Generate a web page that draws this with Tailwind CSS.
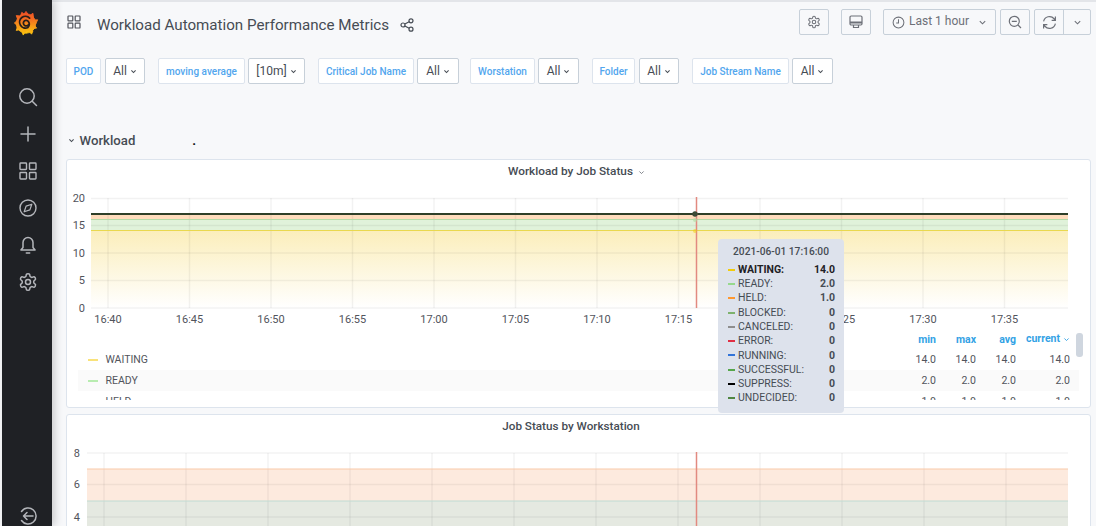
<!DOCTYPE html>
<html lang="en">
<head>
  <meta charset="UTF-8" />
  <title>Workload Automation Performance Metrics</title>
  <script src="https://cdn.jsdelivr.net/npm/@tailwindcss/browser@4"></script>
</head>
<body class="bg-[#f7f8fa] font-[Roboto,sans-serif]">
<div class="relative flex h-[526px] w-[1096px] overflow-hidden bg-[#f7f8fa] pl-[2px]">

  <!-- Sidebar -->
  <aside class="z-10 flex h-full w-[50px] flex-col items-center bg-[#1f2125] pl-[2px] text-[#b4b6bb] shadow-[3px_0_8px_rgba(0,0,0,0.18)]">
    <div class="flex h-[78.5px] w-full justify-center pr-[4px] pt-[10px]">
      <svg viewBox="0 0 28 28" class="h-[26px] w-[26px]">
        <defs>
          <linearGradient id="logo" x1="0" y1="0" x2="0" y2="1">
            <stop offset="0" stop-color="#ef4a28" />
            <stop offset="1" stop-color="#fcc60e" />
          </linearGradient>
        </defs>
        <g fill="url(#logo)" stroke="url(#logo)" stroke-width="1" stroke-linejoin="round">
          <circle cx="14" cy="14.500" r="10.500" />
          <path d="M14 1.500l2.500 3.500h-5zM21.500 3.500l.5 4.500-4-2zM26.500 10.500l-2 4.500-2.500-4zM25.500 19.500l-4.500.5 1.500-4zM20 26l-3-3.500h4.500zM11 27l-1.500-4.500h4.500zM3.500 22l1.500-4.500 3 3.500zM1.500 14l3.500-3v6zM3.500 6l4.500.5-3 3.500zM9.500 2.500l3 2.500-4.500 1.500z" />
        </g>
        <path d="M16.700 15.800a3 3 0 1 1-.8-4.100a4.800 4.800 0 0 1 .2 7.100a6.300 6.300 0 1 1 1.800-10.100" fill="none" stroke="#2a1f1a" stroke-width="1.900" stroke-linecap="round" />
      </svg>
    </div>
    <a class="flex h-[37px] items-center justify-center">
      <svg viewBox="0 0 20 20" class="h-[20px] w-[20px]" fill="none" stroke="currentColor" stroke-width="1.500"><circle cx="9" cy="9" r="7.200" /><path d="M14.200 14.200L18.500 18.500" stroke-linecap="round" /></svg>
    </a>
    <a class="flex h-[37px] items-center justify-center">
      <svg viewBox="0 0 20 20" class="h-[20px] w-[20px]" fill="none" stroke="currentColor" stroke-width="1.500"><path d="M10 3v14M3 10h14" stroke-linecap="round" /></svg>
    </a>
    <a class="flex h-[37px] items-center justify-center">
      <svg viewBox="0 0 20 20" class="h-[20px] w-[20px]" fill="none" stroke="currentColor" stroke-width="1.400"><rect x="2" y="2" width="6.500" height="6.500" rx="0.700" /><rect x="11.500" y="2" width="6.500" height="6.500" rx="0.700" /><rect x="2" y="11.500" width="6.500" height="6.500" rx="0.700" /><rect x="11.500" y="11.500" width="6.500" height="6.500" rx="0.700" /></svg>
    </a>
    <a class="flex h-[37px] items-center justify-center">
      <svg viewBox="0 0 20 20" class="h-[20px] w-[20px]" fill="none" stroke="currentColor" stroke-width="1.400"><circle cx="10" cy="10" r="8" /><path d="M13.800 6.200l-1.900 5.700-5.700 1.900 1.900-5.700z" fill="none" stroke-width="1.200" stroke-linejoin="round" /></svg>
    </a>
    <a class="flex h-[37px] items-center justify-center">
      <svg viewBox="0 0 24 24" class="h-[20px] w-[20px]" fill="none" stroke="currentColor" stroke-width="1.800" stroke-linecap="round" stroke-linejoin="round"><path d="M6 9a6 6 0 0 1 12 0v6l2.500 3H3.500L6 15z" /><path d="M10 21.500h4" /></svg>
    </a>
    <a class="flex h-[37px] items-center justify-center">
      <svg viewBox="0 0 24 24" class="h-[20px] w-[20px]" fill="none" stroke="currentColor" stroke-width="1.800" stroke-linecap="round" stroke-linejoin="round"><path d="M12.220 2h-.44a2 2 0 0 0-2 2v.18a2 2 0 0 1-1 1.730l-.43.250a2 2 0 0 1-2 0l-.15-.08a2 2 0 0 0-2.730.730l-.22.380a2 2 0 0 0 .730 2.730l.15.100a2 2 0 0 1 1 1.720v.510a2 2 0 0 1-1 1.740l-.15.090a2 2 0 0 0-.730 2.730l.22.380a2 2 0 0 0 2.730.730l.15-.08a2 2 0 0 1 2 0l.43.250a2 2 0 0 1 1 1.730V20a2 2 0 0 0 2 2h.44a2 2 0 0 0 2-2v-.18a2 2 0 0 1 1-1.730l.43-.25a2 2 0 0 1 2 0l.15.08a2 2 0 0 0 2.730-.73l.22-.39a2 2 0 0 0-.73-2.730l-.15-.08a2 2 0 0 1-1-1.740v-.5a2 2 0 0 1 1-1.740l.15-.09a2 2 0 0 0 .73-2.730l-.22-.38a2 2 0 0 0-2.730-.73l-.15.08a2 2 0 0 1-2 0l-.43-.25a2 2 0 0 1-1-1.730V4a2 2 0 0 0-2-2z" /><circle cx="12" cy="12" r="3" /></svg>
    </a>
    <a class="mt-auto flex h-[20px] items-start justify-center">
      <svg viewBox="0 0 20 20" class="h-[20px] w-[20px]" fill="none" stroke="currentColor" stroke-width="1.500" stroke-linecap="round" stroke-linejoin="round"><path d="M3.500 5.500a8 8 0 1 1 0 9" /><path d="M15 10H5.500M9 6.500L5.500 10 9 13.500" /></svg>
    </a>
  </aside>

  <!-- Main -->
  <main class="flex min-w-0 flex-1 flex-col border-t-2 border-[#e3e5e9] pl-[14px] pr-[5px] text-[#52545c]">

    <!-- Top bar -->
    <div class="mt-[7px] flex h-[26px] items-center">
      <svg viewBox="0 0 14 14" class="ml-[1px] h-[14px] w-[14px] text-[#52545c]" fill="none" stroke="currentColor" stroke-width="1.200"><rect x="1" y="1" width="4.800" height="4.800" rx="0.600" /><rect x="8.200" y="1" width="4.800" height="4.800" rx="0.600" /><rect x="1" y="8.200" width="4.800" height="4.800" rx="0.600" /><rect x="8.200" y="8.200" width="4.800" height="4.800" rx="0.600" /></svg>
      <h1 class="ml-[16px] mt-[7px] whitespace-nowrap text-[15.150px] text-[#464c54]">Workload Automation Performance Metrics</h1>
      <svg viewBox="0 0 14 14" class="ml-[11px] mt-[5px] h-[14px] w-[14px] text-[#464c54]" fill="none" stroke="currentColor" stroke-width="1.200"><circle cx="3" cy="7" r="2" /><circle cx="11" cy="2.800" r="2" /><circle cx="11" cy="11.200" r="2" /><path d="M4.800 6l4.400-2.300M4.800 8l4.400 2.300" /></svg>

      <div class="ml-auto flex items-center text-[#6d7078]">
        <button class="flex h-[26px] w-[30px] items-center justify-center rounded-[2px] border border-[#c7d0d9] bg-[#f7f8fa]">
          <svg viewBox="0 0 24 24" class="h-[14px] w-[14px]" fill="none" stroke="currentColor" stroke-width="1.800" stroke-linejoin="round"><path d="M12.220 2h-.44a2 2 0 0 0-2 2v.18a2 2 0 0 1-1 1.730l-.43.250a2 2 0 0 1-2 0l-.15-.08a2 2 0 0 0-2.730.730l-.22.380a2 2 0 0 0 .730 2.730l.15.100a2 2 0 0 1 1 1.720v.510a2 2 0 0 1-1 1.740l-.15.090a2 2 0 0 0-.730 2.730l.22.380a2 2 0 0 0 2.730.730l.15-.08a2 2 0 0 1 2 0l.43.250a2 2 0 0 1 1 1.730V20a2 2 0 0 0 2 2h.44a2 2 0 0 0 2-2v-.18a2 2 0 0 1 1-1.730l.43-.25a2 2 0 0 1 2 0l.15.08a2 2 0 0 0 2.730-.73l.22-.39a2 2 0 0 0-.73-2.730l-.15-.08a2 2 0 0 1-1-1.740v-.5a2 2 0 0 1 1-1.740l.15-.09a2 2 0 0 0 .73-2.730l-.22-.38a2 2 0 0 0-2.730-.73l-.15.08a2 2 0 0 1-2 0l-.43-.25a2 2 0 0 1-1-1.730V4a2 2 0 0 0-2-2z" /><circle cx="12" cy="12" r="3" /></svg>
        </button>
        <button class="ml-[12px] flex h-[26px] w-[30px] items-center justify-center rounded-[2px] border border-[#c7d0d9] bg-[#f7f8fa]">
          <svg viewBox="0 0 14 14" class="h-[14px] w-[14px]" fill="none" stroke="currentColor" stroke-width="1.200"><rect x="1" y="1" width="12" height="9" rx="1.200" /><path d="M1 7.500h12" stroke-width="2" /><path d="M4.500 10v2.500h5V10" /></svg>
        </button>
        <button class="ml-[12px] flex h-[26px] w-[113px] items-center rounded-[2px] border border-[#c7d0d9] bg-[#f7f8fa] pl-[8px] text-[12px]">
          <svg viewBox="0 0 14 14" class="mr-[4px] h-[13px] w-[13px]" fill="none" stroke="currentColor" stroke-width="1.100"><circle cx="7" cy="7" r="5.800" /><path d="M7 3.500V7.500H4.500" /></svg>
          <span class="mt-[-2px] whitespace-nowrap">Last 1 hour</span>
          <svg viewBox="0 0 10 10" class="ml-auto mr-[8px] h-[9px] w-[9px]" fill="none" stroke="currentColor" stroke-width="1.200"><path d="M2 3.500L5 6.500 8 3.500" /></svg>
        </button>
        <button class="ml-[4px] flex h-[26px] w-[30px] items-center justify-center rounded-[2px] border border-[#c7d0d9] bg-[#f7f8fa]">
          <svg viewBox="0 0 14 14" class="h-[14px] w-[14px]" fill="none" stroke="currentColor" stroke-width="1.200"><circle cx="6.300" cy="6.300" r="5" /><path d="M3.800 6.300h5M10 10l3 3" /></svg>
        </button>
        <div class="ml-[4px] flex h-[26px] rounded-[2px] border border-[#c7d0d9] bg-[#f7f8fa]">
          <button class="flex w-[29px] items-center justify-center border-r border-[#c7d0d9]">
            <svg viewBox="0 0 14 14" class="h-[15px] w-[15px]" fill="none" stroke="currentColor" stroke-width="1.100"><path d="M1.500 6a5.600 5.600 0 0 1 9.800-2.500L12.500 5M12.500 1.500V5H9M12.500 8a5.600 5.600 0 0 1-9.800 2.500L1.500 9M1.500 12.500V9H5" /></svg>
          </button>
          <button class="flex w-[26px] items-center justify-center">
            <svg viewBox="0 0 10 10" class="h-[9px] w-[9px]" fill="none" stroke="currentColor" stroke-width="1.200"><path d="M2 3.500L5 6.500 8 3.500" /></svg>
          </button>
        </div>
      </div>
    </div>

    <!-- Template variables -->
    <div class="mt-[23px] flex h-[26px] items-center text-[10px] font-medium">
      <span class="flex h-[26px] w-[35px] items-center justify-center rounded-[2px] border border-[#dde4ed] bg-white text-[#52a6ee]">POD</span>
      <span class="ml-[4px] flex h-[26px] w-[40px] items-center justify-center gap-[3px] rounded-[2px] border border-[#c7d0d9] bg-white text-[12px] font-normal text-[#464c54]">All<svg viewBox="0 0 10 10" class="h-[7px] w-[7px]" fill="none" stroke="currentColor" stroke-width="1.500"><path d="M2 3.500L5 6.500 8 3.500" /></svg></span>
      <span class="ml-[13px] flex h-[26px] w-[87px] items-center justify-center rounded-[2px] border border-[#dde4ed] bg-white text-[#52a6ee]">moving average</span>
      <span class="ml-[3px] flex h-[26px] w-[57px] items-center justify-center gap-[3px] rounded-[2px] border border-[#c7d0d9] bg-white text-[12px] font-normal text-[#464c54]">[10m]<svg viewBox="0 0 10 10" class="h-[7px] w-[7px]" fill="none" stroke="currentColor" stroke-width="1.500"><path d="M2 3.500L5 6.500 8 3.500" /></svg></span>
      <span class="ml-[13px] flex h-[26px] w-[96px] items-center justify-center rounded-[2px] border border-[#dde4ed] bg-white text-[#52a6ee]">Critical Job Name</span>
      <span class="ml-[3px] flex h-[26px] w-[42px] items-center justify-center gap-[3px] rounded-[2px] border border-[#c7d0d9] bg-white text-[12px] font-normal text-[#464c54]">All<svg viewBox="0 0 10 10" class="h-[7px] w-[7px]" fill="none" stroke="currentColor" stroke-width="1.500"><path d="M2 3.500L5 6.500 8 3.500" /></svg></span>
      <span class="ml-[11px] flex h-[26px] w-[65px] items-center justify-center rounded-[2px] border border-[#dde4ed] bg-white text-[#52a6ee]">Worstation</span>
      <span class="ml-[3px] flex h-[26px] w-[41px] items-center justify-center gap-[3px] rounded-[2px] border border-[#c7d0d9] bg-white text-[12px] font-normal text-[#464c54]">All<svg viewBox="0 0 10 10" class="h-[7px] w-[7px]" fill="none" stroke="currentColor" stroke-width="1.500"><path d="M2 3.500L5 6.500 8 3.500" /></svg></span>
      <span class="ml-[13px] flex h-[26px] w-[43px] items-center justify-center rounded-[2px] border border-[#dde4ed] bg-white text-[#52a6ee]">Folder</span>
      <span class="ml-[4px] flex h-[26px] w-[40px] items-center justify-center gap-[3px] rounded-[2px] border border-[#c7d0d9] bg-white text-[12px] font-normal text-[#464c54]">All<svg viewBox="0 0 10 10" class="h-[7px] w-[7px]" fill="none" stroke="currentColor" stroke-width="1.500"><path d="M2 3.500L5 6.500 8 3.500" /></svg></span>
      <span class="ml-[13px] flex h-[26px] w-[97px] items-center justify-center rounded-[2px] border border-[#dde4ed] bg-white text-[#52a6ee]">Job Stream Name</span>
      <span class="ml-[3px] flex h-[26px] w-[41px] items-center justify-center gap-[3px] rounded-[2px] border border-[#c7d0d9] bg-white text-[12px] font-normal text-[#464c54]">All<svg viewBox="0 0 10 10" class="h-[7px] w-[7px]" fill="none" stroke="currentColor" stroke-width="1.500"><path d="M2 3.500L5 6.500 8 3.500" /></svg></span>
    </div>

    <!-- Row header -->
    <div class="mt-[47px] flex h-[20px] items-center text-[13.200px] font-medium text-[#464c54]">
      <svg viewBox="0 0 10 10" class="ml-[2px] mr-[4.500px] h-[7px] w-[7px]" fill="none" stroke="currentColor" stroke-width="1.500"><path d="M2 3.500L5 6.500 8 3.500" /></svg>
      <span>Workload</span>
      <span class="ml-[57px] font-bold text-[#111]">.</span>
    </div>

    <!-- Panel: Workload by Job Status -->
    <section class="relative mt-[8px] h-[249px] shrink-0 rounded-[3px] border border-[#dde4ed] bg-white">
      <h2 class="flex h-[22px] items-center justify-center gap-[5px] pr-[4px] pt-[3px] text-[11.800px] font-medium text-[#464c54]">
        Workload by Job Status
        <svg viewBox="0 0 10 10" class="h-[7px] w-[7px] text-[#6d7078]" fill="none" stroke="currentColor" stroke-width="1.200"><path d="M2 3.500L5 6.500 8 3.500" /></svg>
      </h2>
      <svg viewBox="67 182 1023 148" class="block h-[148px] w-[1023px]" font-size="11" fill="#52545c">
        <defs>
          <linearGradient id="yellowFill" x1="0" y1="0" x2="0" y2="1">
            <stop offset="0" stop-color="#fbeebb" />
            <stop offset="1" stop-color="#ffffff" />
          </linearGradient>
        </defs>
        <rect x="91" y="230.500" width="977" height="77.500" fill="url(#yellowFill)" />
        <rect x="91" y="219.500" width="977" height="11" fill="#e0f2da" />
        <rect x="91" y="214" width="977" height="5.500" fill="#fedcbc" />
        <g stroke="#000" stroke-opacity="0.050" stroke-width="1.500">
          <path d="M91 198.500H1068M91 225.500H1068M91 253H1068M91 280.500H1068M91 308H1068" />
          <path d="M108 198V308M189.500 198V308M271 198V308M352.500 198V308M434 198V308M515.500 198V308M597 198V308M678.500 198V308M760 198V308M841.500 198V308M923 198V308M1004.500 198V308" />
        </g>
        <path d="M91 230.500H1068" stroke="#e9d84e" stroke-width="1" />
        <path d="M91 219.500H1068" stroke="#b5dca8" stroke-width="1" />
        <path d="M91 214H1068" stroke="#2e3f28" stroke-width="2" />
        <path d="M696.500 197V308" stroke="#e28a80" stroke-width="1.500" />
        <circle cx="695" cy="214" r="2.700" fill="#3c4a36" />
        <circle cx="695" cy="220" r="2" fill="#b5dca8" fill-opacity="0.700" />
        <circle cx="695" cy="231" r="2" fill="#f2cc0c" fill-opacity="0.500" />
        <g text-anchor="end">
          <text x="85" y="202">20</text>
          <text x="85" y="229">15</text>
          <text x="85" y="257">10</text>
          <text x="85" y="284">5</text>
          <text x="85" y="312">0</text>
        </g>
        <g text-anchor="middle">
          <text x="108" y="323">16:40</text>
          <text x="189.500" y="323">16:45</text>
          <text x="271" y="323">16:50</text>
          <text x="352.500" y="323">16:55</text>
          <text x="434" y="323">17:00</text>
          <text x="515.500" y="323">17:05</text>
          <text x="597" y="323">17:10</text>
          <text x="678.500" y="323">17:15</text>
          <text x="760" y="323">17:20</text>
          <text x="841.500" y="323">17:25</text>
          <text x="923" y="323">17:30</text>
          <text x="1004.500" y="323">17:35</text>
        </g>
      </svg>
      <!-- Legend -->
      <div class="ml-[11px] h-[70px] w-[1001px] overflow-hidden text-[10.500px] text-[#52545c]">
        <div class="flex h-[19px] items-center pr-[9px] pt-[2px] text-right font-bold text-[#33a2e5]">
          <span class="flex-1"></span>
          <span class="w-[40px]">min</span>
          <span class="w-[40px]">max</span>
          <span class="w-[40px]">avg</span>
          <span class="flex w-[54px] items-center justify-end gap-[3px] pb-[2px]">current<svg viewBox="0 0 10 10" class="h-[7px] w-[7px]" fill="none" stroke="currentColor" stroke-width="1.300"><path d="M2 3.500L5 6.500 8 3.500" /></svg></span>
        </div>
        <div class="flex h-[21px] items-center pl-[10px] pr-[9px] pt-[2px] text-right">
          <i class="h-[2px] w-[10px] bg-[#f9e27a]"></i><span class="ml-[7.500px] flex-1 text-left">WAITING</span>
          <span class="w-[40px]">14.0</span><span class="w-[40px]">14.0</span><span class="w-[40px]">14.0</span><span class="w-[54px]">14.0</span>
        </div>
        <div class="flex h-[21px] items-center bg-[#fafafa] pl-[10px] pr-[9px] pt-[2px] text-right">
          <i class="h-[2px] w-[10px] bg-[#b8ecb0]"></i><span class="ml-[7.500px] flex-1 text-left">READY</span>
          <span class="w-[40px]">2.0</span><span class="w-[40px]">2.0</span><span class="w-[40px]">2.0</span><span class="w-[54px]">2.0</span>
        </div>
        <div class="flex h-[21px] items-center pl-[10px] pr-[9px] pt-[2px] text-right">
          <i class="h-[2px] w-[10px] bg-[#ffa04a]"></i><span class="ml-[7.500px] flex-1 text-left">HELD</span>
          <span class="w-[40px]">1.0</span><span class="w-[40px]">1.0</span><span class="w-[40px]">1.0</span><span class="w-[54px]">1.0</span>
        </div>
      </div>
      <div class="absolute left-[1009px] top-[173px] h-[24px] w-[7px] rounded-[3px] bg-[#cfd6df]"></div>
    </section>

    <!-- Panel: Job Status by Workstation -->
    <section class="mt-[6px] h-[130px] shrink-0 rounded-[3px] border border-[#dde4ed] bg-white">
      <h2 class="flex h-[22px] items-center justify-center pr-[15px] pt-[2px] text-[11.700px] font-medium text-[#464c54]">Job Status by Workstation</h2>
      <svg viewBox="67 437 1023 100" class="block h-[100px] w-[1023px]" font-size="11" fill="#52545c">
        <rect x="87" y="469" width="981" height="32" fill="#fdeade" />
        <rect x="87" y="501" width="981" height="36" fill="#e5e9e1" />
        <g stroke="#000" stroke-opacity="0.050" stroke-width="1.500">
          <path d="M87 453H1068M87 484.500H1068M87 517H1068" />
          <path d="M104 453V537M186 453V537M268 453V537M350 453V537M432 453V537M514 453V537M596 453V537M678 453V537M760 453V537M842 453V537M924 453V537M1006 453V537" />
        </g>
        <path d="M87 469H1068" stroke="#f9c9a8" />
        <path d="M87 501H1068" stroke="#bfdcd4" />
        <path d="M696.500 452V537" stroke="#e28a80" stroke-width="1.500" />
        <g text-anchor="end">
          <text x="80" y="457">8</text>
          <text x="80" y="488">6</text>
          <text x="80" y="521">4</text>
        </g>
      </svg>
    </section>
  </main>

  <!-- Hover tooltip -->
  <div class="absolute left-[718px] top-[239px] z-20 h-[174px] w-[126px] rounded-[4px] bg-[#dde2ec] px-[10px] pt-[5px] text-[10.500px] text-[#464c54]">
    <div class="mb-[2.500px] h-[16px] text-center text-[10.200px] leading-[16px] font-medium">2021-06-01 17:16:00</div>
    <div class="flex h-[14.300px] items-center font-bold text-[#1f2125]"><i class="mr-[3px] h-[2px] w-[7px] bg-[#f2cc0c]"></i>WAITING:<span class="ml-auto mr-[-1px]">14.0</span></div>
    <div class="flex h-[14.300px] items-center"><i class="mr-[3px] h-[2px] w-[7px] bg-[#96d98d]"></i>READY:<span class="ml-auto mr-[-1px] font-bold">2.0</span></div>
    <div class="flex h-[14.300px] items-center"><i class="mr-[3px] h-[2px] w-[7px] bg-[#ff9830]"></i>HELD:<span class="ml-auto mr-[-1px] font-bold">1.0</span></div>
    <div class="flex h-[14.300px] items-center"><i class="mr-[3px] h-[2px] w-[7px] bg-[#7eb26d]"></i>BLOCKED:<span class="ml-auto mr-[-1px] font-bold">0</span></div>
    <div class="flex h-[14.300px] items-center"><i class="mr-[3px] h-[2px] w-[7px] bg-[#8e8e8e]"></i>CANCELED:<span class="ml-auto mr-[-1px] font-bold">0</span></div>
    <div class="flex h-[14.300px] items-center"><i class="mr-[3px] h-[2px] w-[7px] bg-[#e02f44]"></i>ERROR:<span class="ml-auto mr-[-1px] font-bold">0</span></div>
    <div class="flex h-[14.300px] items-center"><i class="mr-[3px] h-[2px] w-[7px] bg-[#3274d9]"></i>RUNNING:<span class="ml-auto mr-[-1px] font-bold">0</span></div>
    <div class="flex h-[14.300px] items-center"><i class="mr-[3px] h-[2px] w-[7px] bg-[#56a64b]"></i>SUCCESSFUL:<span class="ml-auto mr-[-1px] font-bold">0</span></div>
    <div class="flex h-[14.300px] items-center"><i class="mr-[3px] h-[2px] w-[7px] bg-black"></i>SUPPRESS:<span class="ml-auto mr-[-1px] font-bold">0</span></div>
    <div class="flex h-[14.300px] items-center"><i class="mr-[3px] h-[2px] w-[7px] bg-[#508642]"></i>UNDECIDED:<span class="ml-auto mr-[-1px] font-bold">0</span></div>
  </div>
</div>
</body>
</html>
